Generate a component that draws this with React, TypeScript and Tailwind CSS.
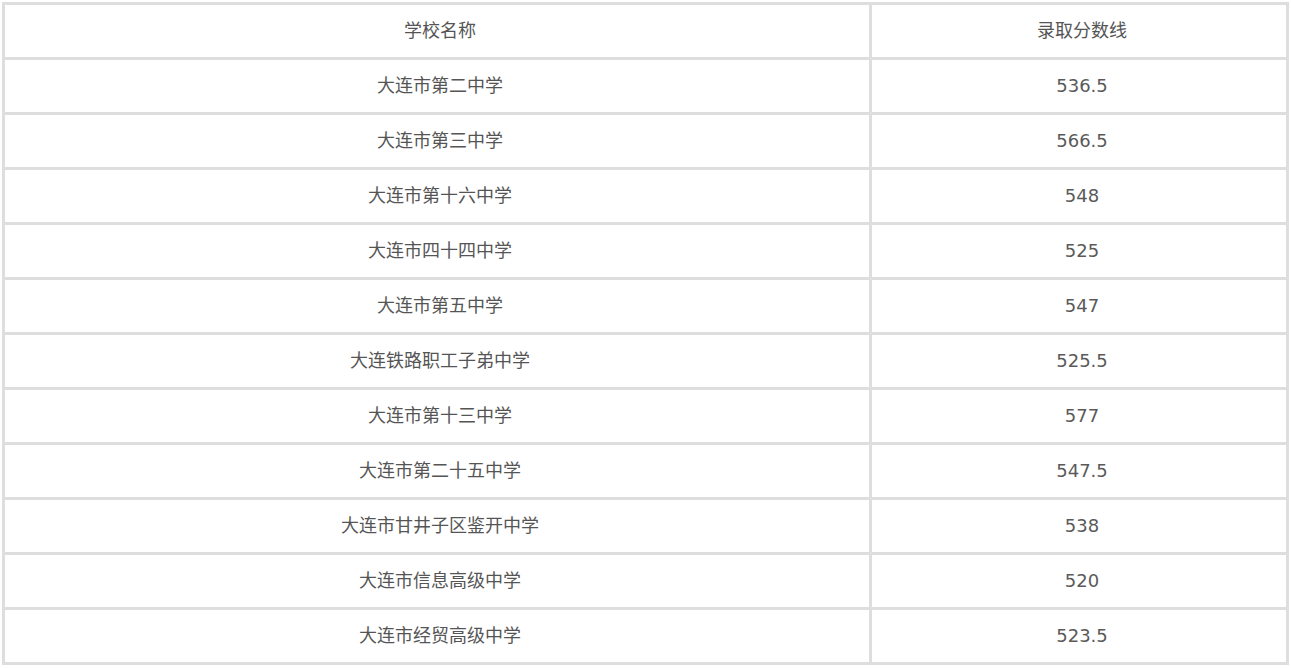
const rows: [string, string][] = [
  ["大连市第二中学", "536.5"],
  ["大连市第三中学", "566.5"],
  ["大连市第十六中学", "548"],
  ["大连市四十四中学", "525"],
  ["大连市第五中学", "547"],
  ["大连铁路职工子弟中学", "525.5"],
  ["大连市第十三中学", "577"],
  ["大连市第二十五中学", "547.5"],
  ["大连市甘井子区鉴开中学", "538"],
  ["大连市信息高级中学", "520"],
  ["大连市经贸高级中学", "523.5"],
];

const App = () => {
  return (
    <div className="bg-white w-[1291px] h-[668px] pt-[2px] pl-[2px]">
      <table
        className="w-[1287px] border-collapse text-[#555] text-[18px]"
        style={{ fontFamily: '"DejaVu Sans", "Noto Sans CJK SC", sans-serif' }}
      >
        <thead>
          <tr className="h-[55px]">
            <th className="w-[867px] border-[3px] border-[#dedede] font-normal pl-[6px] pb-[2px]">学校名称</th>
            <th className="border-[3px] border-[#dedede] font-normal pl-[6px] pb-[2px]">录取分数线</th>
          </tr>
        </thead>
        <tbody>
          {rows.map(([name, score]) => (
            <tr key={name} className="h-[55px]">
              <td className="border-[3px] border-[#dedede] text-center pl-[6px] pb-[2px]">{name}</td>
              <td className="border-[3px] border-[#dedede] text-center text-[#5a5a5a] pl-[6px] pb-[2px]">{score}</td>
            </tr>
          ))}
        </tbody>
      </table>
    </div>
  );
};

export default App;
